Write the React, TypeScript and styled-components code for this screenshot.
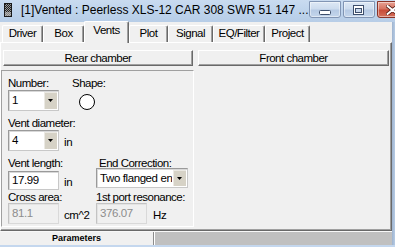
import React from 'react';
import styled, { createGlobalStyle } from 'styled-components';

const GlobalStyle = createGlobalStyle`
	html, body {
		margin: 0;
		padding: 0;
		background: #f0f0f0;
	}
	body {
		width: 395px;
		height: 247px;
		overflow: hidden;
	}
`;

const uiFont = `"Liberation Sans", Arial, sans-serif`;

const Window = styled.div`
	width: 395px;
	height: 247px;
	display: flex;
	flex-direction: column;
	background: #b9cfe8;
	overflow: hidden;
`;

const TitleBar = styled.div`
	height: 22px;
	flex: none;
	display: flex;
	align-items: flex-start;
	background: linear-gradient(#c9dbf0, #bcd2eb 60%, #b7cde7);
`;

const AppIcon = styled.svg`
	margin: 3px 0 0 4px;
	flex: none;
`;

const Title = styled.div`
	margin: 3px 0 0 9px;
	font-family: "Liberation Sans", Arial, sans-serif;
	font-size: 12px;
	line-height: 15px;
	color: #000;
	white-space: nowrap;
`;

const Controls = styled.div`
	margin: 1px 3px 0 auto;
	display: flex;
	gap: 2px;
`;

const CaptionButton = styled.div<{ $close?: boolean }>`
	width: ${(p) => (p.$close ? 31 : 32)}px;
	height: 17px;
	box-sizing: border-box;
	display: flex;
	align-items: center;
	justify-content: center;
	border: 1px solid ${(p) => (p.$close ? '#8a3327' : '#8195b4')};
	border-radius: 0 0 3px 3px;
	background: ${(p) =>
		p.$close
			? 'linear-gradient(#e7a193, #d77563 45%, #c84b38 55%, #d4705c)'
			: 'linear-gradient(#dde8f5, #cddcee 45%, #b6cae4 55%, #c4d6ec)'};
	box-shadow: inset 0 0 0 1px rgba(255, 255, 255, 0.45);
`;

const Body = styled.div`
	flex: 1;
	display: flex;
	min-height: 0;
`;

const Main = styled.div`
	width: 392px;
	display: flex;
	flex-direction: column;
	background: #f0f0f0;
`;

const RightFrame = styled.div`
	flex: 1;
	background: linear-gradient(90deg, #9fb4cf, #b6cbe4);
`;

const BottomFrame = styled.div`
	height: 2px;
	flex: none;
	background: #c4d7ee;
`;

const TabRow = styled.div`
	height: 20px;
	flex: none;
	display: flex;
	align-items: flex-end;
	padding-left: 2px;
	position: relative;
	z-index: 1;
`;

const Tab = styled.div<{ $width: number; $active?: boolean }>`
	width: ${(p) => p.$width}px;
	height: ${(p) => (p.$active ? 22 : 17)}px;
	margin-bottom: ${(p) => (p.$active ? -1 : 0)}px;
	box-sizing: border-box;
	flex: none;
	display: flex;
	justify-content: center;
	padding-top: ${(p) => (p.$active ? 1 : 0)}px;
	background: #f0f0f0;
	border-top: 1px solid #fff;
	border-left: 1px solid #fff;
	border-right: 1px solid #696969;
	border-radius: 2px 2px 0 0;
	box-shadow: inset -1px 0 #a0a0a0;
	font-family: ${uiFont};
	font-size: 11.5px;
	letter-spacing: -0.5px;
	line-height: 14px;
	color: #000;
`;

const Page = styled.div`
	flex: 1;
	display: grid;
	grid-template-columns: 193px 1fr;
	padding: 7px 0 3px 0;
	border-top: 1px solid #fff;
	border-left: 1px solid #fff;
	border-right: 1px solid #696969;
	border-bottom: 1px solid #696969;
	box-shadow: inset -1px -1px #a0a0a0;
	min-height: 0;
`;

const Column = styled.div<{ $front?: boolean }>`
	display: flex;
	flex-direction: column;
	gap: 4px;
	padding-left: ${(p) => (p.$front ? 4 : 0)}px;
	padding-right: ${(p) => (p.$front ? 2 : 0)}px;
`;

const ChamberButton = styled.div<{ $front?: boolean }>`
	height: 16px;
	box-sizing: border-box;
	margin: ${(p) => (p.$front ? '0' : '0 1px 0 2px')};
	border-top: 1px solid #fff;
	border-left: 1px solid #fff;
	border-right: 1px solid #696969;
	border-bottom: 1px solid #696969;
	box-shadow: inset -1px -1px #a0a0a0;
	text-align: center;
	font-family: ${uiFont};
	font-size: 11.5px;
	letter-spacing: -0.5px;
	line-height: 14px;
	color: #000;
`;

const Panel = styled.div<{ $sunken?: boolean }>`
	flex: 1;
	box-sizing: border-box;
	padding: 6px 0 0 6px;
	border: 1px solid transparent;
	border-color: ${(p) => (p.$sunken ? '#a0a0a0 #fff #fff #a0a0a0' : 'transparent')};
`;

const Row = styled.div<{ $mt?: number }>`
	display: flex;
	align-items: flex-start;
	margin-top: ${(p) => p.$mt ?? 0}px;
`;

const Field = styled.div<{ $width?: number }>`
	display: flex;
	flex-direction: column;
	width: ${(p) => (p.$width ? `${p.$width}px` : 'auto')};
	flex: none;
`;

const Label = styled.div<{ $indent?: number }>`
	height: 12px;
	padding-left: ${(p) => p.$indent ?? 0}px;
	font-family: ${uiFont};
	font-size: 11.5px;
	letter-spacing: -0.5px;
	line-height: 12px;
	color: #000;
	white-space: nowrap;
`;

const ControlLine = styled.div<{ $gap?: number }>`
	display: flex;
	align-items: center;
	gap: 5px;
	margin-top: ${(p) => p.$gap ?? 1}px;
`;

const Unit = styled.span<{ $ml?: number }>`
	margin-left: ${(p) => p.$ml ?? 0}px;
	font-family: ${uiFont};
	font-size: 11.5px;
	letter-spacing: -0.4px;
	line-height: 14px;
	color: #000;
	padding-top: 2px;
`;

const Box = styled.div<{ $width: number; $height: number; $disabled?: boolean }>`
	width: ${(p) => p.$width}px;
	height: ${(p) => p.$height}px;
	box-sizing: border-box;
	display: flex;
	align-items: center;
	border: 1px solid ${(p) => (p.$disabled ? '#c3c3c3' : '#9a9a9a')};
	border-bottom-color: ${(p) => (p.$disabled ? '#d9d9d9' : '#c8c8c8')};
	border-right-color: ${(p) => (p.$disabled ? '#d9d9d9' : '#c8c8c8')};
	box-shadow: inset 1px 1px ${(p) => (p.$disabled ? '#e3e3e3' : '#d8d8d8')};
	background: ${(p) => (p.$disabled ? '#f0f0f0' : '#fff')};
	overflow: hidden;
`;

const BoxText = styled.span<{ $disabled?: boolean }>`
	flex: 1;
	min-width: 0;
	padding-left: 3px;
	overflow: hidden;
	white-space: nowrap;
	font-family: ${uiFont};
	font-size: 11.5px;
	letter-spacing: -0.4px;
	line-height: 15px;
	color: ${(p) => (p.$disabled ? '#8d8d8d' : '#000')};
`;

const DropButton = styled.div`
	width: 13px;
	align-self: stretch;
	margin: 1px;
	flex: none;
	display: flex;
	align-items: center;
	justify-content: center;
	background: #d6d2c6;
	box-shadow: inset 1px 1px #ebe9e3;
`;

const ShapeCircle = styled.div`
	width: 16px;
	height: 16px;
	box-sizing: border-box;
	margin: 5px 0 0 7px;
	border: 1px solid #000;
	border-radius: 50%;
	background: #fff;
`;

const StatusStrip = styled.div`
	height: 14px;
	flex: none;
	display: flex;
	border-top: 1px solid #f8f8f8;
	box-sizing: border-box;
`;

const StatusTab = styled.div`
	width: 154px;
	box-sizing: border-box;
	border-right: 1px solid #8c8c8c;
	text-align: center;
	font-family: "Liberation Sans", Arial, sans-serif;
	font-weight: bold;
	font-size: 9px;
	line-height: 13px;
	color: #000;
`;

const StatusFill = styled.div`
	flex: 1;
	background: #c0c0c0;
	border-left: 1px solid #fff;
`;

const Arrow = () => (
	<svg width="5" height="3" viewBox="0 0 5 3">
		<polygon points="0,0 5,0 2.5,3" fill="#000" />
	</svg>
);

const Combo = ({ value, width, height }: { value: string; width: number; height: number }) => (
	<Box $width={width} $height={height}>
		<BoxText>{value}</BoxText>
		<DropButton>
			<Arrow />
		</DropButton>
	</Box>
);

const Edit = ({ value, disabled, height = 19 }: { value: string; disabled?: boolean; height?: number }) => (
	<Box $width={51} $height={height} $disabled={disabled}>
		<BoxText $disabled={disabled}>{value}</BoxText>
	</Box>
);

const tabs = [
	{ name: 'Driver', width: 41 },
	{ name: 'Box', width: 41 },
	{ name: 'Vents', width: 45, active: true },
	{ name: 'Plot', width: 39 },
	{ name: 'Signal', width: 45 },
	{ name: 'EQ/Filter', width: 52 },
	{ name: 'Project', width: 45 },
];

const App = () => (
	<>
		<GlobalStyle />
		<Window>
			<TitleBar>
				<AppIcon width="8" height="14" viewBox="0 0 8 14">
					<defs>
						<pattern id="dots" width="2" height="2" patternUnits="userSpaceOnUse">
							<rect width="2" height="2" fill="#9a9a9a" />
							<rect width="1" height="1" fill="#202020" />
							<rect x="1" y="1" width="1" height="1" fill="#202020" />
						</pattern>
					</defs>
					<rect x="0" y="0" width="8" height="14" fill="#1a1a1a" />
					<rect x="1" y="1" width="6" height="12" fill="url(#dots)" />
					<rect x="1" y="9" width="6" height="4" fill="#c8c8c8" opacity="0.6" />
				</AppIcon>
				<Title>[1]Vented : Peerless XLS-12 CAR 308 SWR 51 147 ...</Title>
				<Controls>
					<CaptionButton>
						<svg width="12" height="10" viewBox="0 0 12 10">
							<rect x="0.5" y="5.5" width="11" height="4" rx="1" fill="#fff" stroke="#3d4e6b" />
						</svg>
					</CaptionButton>
					<CaptionButton>
						<svg width="11" height="10" viewBox="0 0 11 10">
							<rect x="0.5" y="0.5" width="10" height="9" fill="#fff" stroke="#3d4e6b" />
							<rect x="2.5" y="3.5" width="6" height="4" fill="#c9d8ec" stroke="#3d4e6b" />
						</svg>
					</CaptionButton>
					<CaptionButton $close>
						<svg width="13" height="10" viewBox="0 0 13 10">
							<path d="M1.5 1 L11.5 9 M11.5 1 L1.5 9" stroke="#5a2018" strokeWidth="3.6" strokeLinecap="round" />
							<path d="M1.5 1 L11.5 9 M11.5 1 L1.5 9" stroke="#fff" strokeWidth="2" strokeLinecap="round" />
						</svg>
					</CaptionButton>
				</Controls>
			</TitleBar>
			<Body>
				<Main>
					<TabRow>
						{tabs.map((t) => (
							<Tab key={t.name} $width={t.width} $active={t.active}>
								{t.name}
							</Tab>
						))}
					</TabRow>
					<Page>
						<Column>
							<ChamberButton>Rear chamber</ChamberButton>
							<Panel $sunken>
								<Row>
									<Field $width={64}>
										<Label>Number:</Label>
										<ControlLine>
											<Combo value="1" width={51} height={21} />
										</ControlLine>
									</Field>
									<Field>
										<Label>Shape:</Label>
										<ShapeCircle />
									</Field>
								</Row>
								<Row $mt={6}>
									<Field>
										<Label>Vent diameter:</Label>
										<ControlLine>
											<Combo value="4" width={51} height={21} />
											<Unit>in</Unit>
										</ControlLine>
									</Field>
								</Row>
								<Row $mt={6}>
									<Field $width={88}>
										<Label>Vent length:</Label>
										<ControlLine $gap={2}>
											<Edit value="17.99" />
											<Unit>in</Unit>
										</ControlLine>
									</Field>
									<Field>
										<Label $indent={3}>End Correction:</Label>
										<ControlLine $gap={-1}>
											<Combo value="Two flanged ends" width={92} height={20} />
										</ControlLine>
									</Field>
								</Row>
								<Row $mt={1}>
									<Field $width={88}>
										<Label>Cross area:</Label>
										<ControlLine $gap={0}>
											<Edit value="81.1" disabled height={21} />
											<Unit>cm^2</Unit>
										</ControlLine>
									</Field>
									<Field>
										<Label>1st port resonance:</Label>
										<ControlLine $gap={0}>
											<Edit value="376.07" disabled height={21} />
											<Unit $ml={1}>Hz</Unit>
										</ControlLine>
									</Field>
								</Row>
							</Panel>
						</Column>
						<Column $front>
							<ChamberButton $front>Front chamber</ChamberButton>
							<Panel />
						</Column>
					</Page>
					<StatusStrip>
						<StatusTab>Parameters</StatusTab>
						<StatusFill />
					</StatusStrip>
				</Main>
				<RightFrame />
			</Body>
			<BottomFrame />
		</Window>
	</>
);

export default App;
